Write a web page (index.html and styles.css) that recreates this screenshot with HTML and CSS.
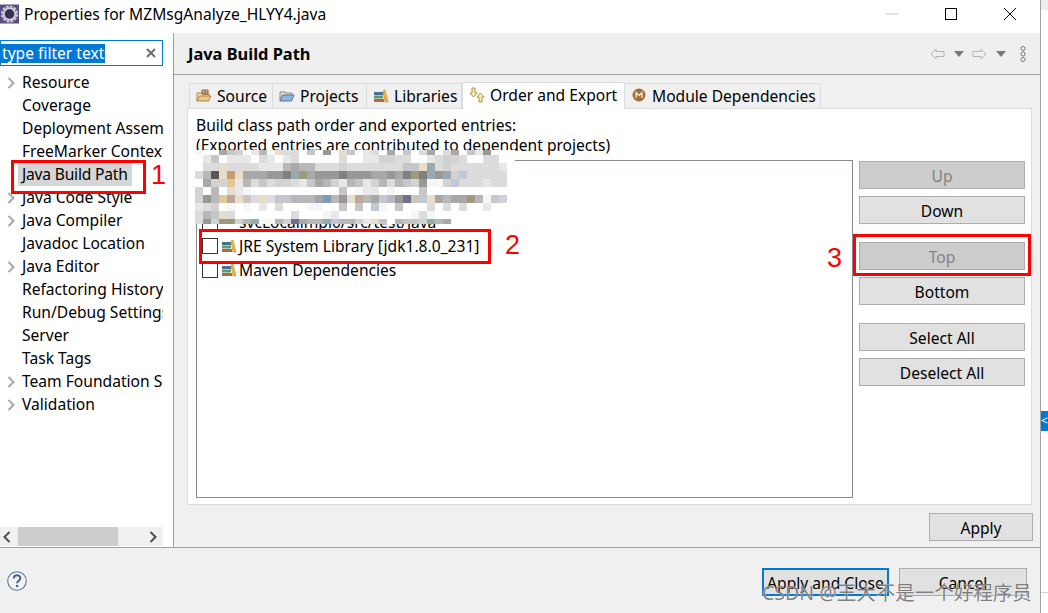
FILE: index.html
```html
<!DOCTYPE html>
<html lang="en">
<head>
<meta charset="utf-8">
<title>Properties for MZMsgAnalyze_HLYY4.java</title>
<link rel="stylesheet" href="styles.css">
</head>
<body>
<svg class="defs" width="0" height="0" aria-hidden="true">
  <symbol id="books" viewBox="0 0 16 16">
    <rect x="1" y="4" width="9" height="3" fill="#4a6f8f"/>
    <rect x="1" y="7.5" width="9" height="3" fill="#5f9a6a"/>
    <rect x="1" y="11" width="10" height="3" fill="#b5683a"/>
    <path d="M10 3l2-1 3 12h-3z" fill="#f0b840" stroke="#b98a28" stroke-width=".6"/>
  </symbol>
  <symbol id="chev" viewBox="0 0 8 12">
    <path d="M1.5 1l5 5-5 5" fill="none" stroke="#a6a6a6" stroke-width="2"/>
  </symbol>
</svg>
<div class="window">
  <header class="titlebar">
    <svg class="app-icon" viewBox="0 0 20 20"><rect width="20" height="20" fill="#5b4c82"/><circle cx="10" cy="10" r="8" fill="none" stroke="#cfcdd8" stroke-width="2" stroke-dasharray="3 1.200"/><circle cx="10" cy="10" r="6" fill="none" stroke="#d8d6e0" stroke-width="2"/><circle cx="10" cy="10" r="5" fill="#3a3157"/></svg>
    <span class="title">Properties for MZMsgAnalyze_HLYY4.java</span>
    <div class="winbtns">
      <svg class="winbtn" viewBox="0 0 12 12"><path d="M0 6h12" stroke="#c8c8c8"/></svg>
      <svg class="winbtn" viewBox="0 0 12 12"><rect x=".5" y=".5" width="11" height="11" fill="none" stroke="#000"/></svg>
      <svg class="winbtn" viewBox="0 0 12 12"><path d="M0 0l12 12M12 0L0 12" stroke="#000" stroke-width="1"/></svg>
    </div>
  </header>
  <div class="main">
    <aside class="sidebar">
      <div class="filter"><span class="filter-sel">type filter text</span>
        <svg class="filter-x" viewBox="0 0 10 10"><path d="M1 1l8 8M9 1L1 9" stroke="#6e6e6e" stroke-width="2"/></svg>
      </div>
      <ul class="tree">
        <li class="node"><svg class="chev"><use href="#chev"/></svg><span>Resource</span></li>
        <li class="node"><span>Coverage</span></li>
        <li class="node"><span>Deployment Assembly</span></li>
        <li class="node"><span>FreeMarker Context</span></li>
        <li class="node"><span class="sel">Java Build Path</span></li>
        <li class="node"><svg class="chev"><use href="#chev"/></svg><span>Java Code Style</span></li>
        <li class="node"><svg class="chev"><use href="#chev"/></svg><span>Java Compiler</span></li>
        <li class="node"><span>Javadoc Location</span></li>
        <li class="node"><svg class="chev"><use href="#chev"/></svg><span>Java Editor</span></li>
        <li class="node"><span>Refactoring History</span></li>
        <li class="node"><span>Run/Debug Settings</span></li>
        <li class="node"><span>Server</span></li>
        <li class="node"><span>Task Tags</span></li>
        <li class="node"><svg class="chev"><use href="#chev"/></svg><span>Team Foundation Server</span></li>
        <li class="node"><svg class="chev"><use href="#chev"/></svg><span>Validation</span></li>
      </ul>
      <div class="hscroll">
        <svg class="sarrow" viewBox="0 0 8 12"><path d="M6.5 1l-5 5 5 5" fill="none" stroke="#505050" stroke-width="2"/></svg>
        <div class="track"><div class="thumb"></div></div>
        <svg class="sarrow" viewBox="0 0 8 12"><path d="M1.5 1l5 5-5 5" fill="none" stroke="#505050" stroke-width="2"/></svg>
      </div>
    </aside>
    <section class="content">
      <div class="head">
        <h1 class="head-title">Java Build Path</h1>
        <div class="nav">
          <svg class="nav-arrow" viewBox="0 0 15 12"><path d="M6 1L1 6l5 5V8.500h8v-5H6z" fill="none" stroke="#b4b4b4"/></svg>
          <svg class="nav-drop" viewBox="0 0 10 6"><path d="M0 0h10L5 6z" fill="#7a7a7a"/></svg>
          <svg class="nav-arrow" viewBox="0 0 15 12"><path d="M9 1l5 5-5 5V8.500H1v-5h8z" fill="none" stroke="#b4b4b4"/></svg>
          <svg class="nav-drop" viewBox="0 0 10 6"><path d="M0 0h10L5 6z" fill="#7a7a7a"/></svg>
          <svg class="nav-more" viewBox="0 0 6 16"><g fill="#fff" stroke="#707070"><circle cx="3" cy="2.500" r="2"/><circle cx="3" cy="8" r="2"/><circle cx="3" cy="13.500" r="2"/></g></svg>
        </div>
      </div>
      <div class="body">
        <nav class="tabs">
          <div class="tab tab-source">
            <svg class="ico" viewBox="0 0 16 16"><path d="M1 13V5h5l1 1h6v2" fill="#f3dca8" stroke="#a5854f"/><path d="M1 13l2.500-5H15l-2.500 5z" fill="#eec785" stroke="#a5854f"/><path d="M6 2h6v4H6zM9 2v4M6 4h6" fill="none" stroke="#8b5a32"/></svg>
            Source</div>
          <div class="tab tab-projects">
            <svg class="ico" viewBox="0 0 16 16"><path d="M1 13V4h5l1 1h6v3" fill="#f0dfa8" stroke="#7f8fa8"/><path d="M1 13l2.500-6H15l-2.500 6z" fill="#8fb4e0" stroke="#4f74a8"/></svg>
            Projects</div>
          <div class="tab tab-libs"><svg class="ico"><use href="#books"/></svg>Libraries</div>
          <div class="tab tab-order">
            <svg class="ico" viewBox="0 0 16 16"><path d="M3 1h3v5h2L4.500 10 1 6h2z" fill="#fbeeb8" stroke="#b8932f"/><path d="M10 15h3v-5h2l-3.500-4L8 10h2z" fill="#fbeeb8" stroke="#b8932f"/></svg>
            Order and Export</div>
          <div class="tab tab-module">
            <svg class="ico" viewBox="0 0 16 16"><circle cx="8" cy="7" r="6.500" fill="#a0703a"/><path d="M5 10V4.500l3 3 3-3V10" fill="none" stroke="#f2e3cc" stroke-width="1.300"/></svg>
            Module Dependencies</div>
        </nav>
        <div class="panel">
          <p class="desc">Build class path order and exported entries:</p>
          <p class="desc">(Exported entries are contributed to dependent projects)</p>
          <div class="cols">
            <ul class="list">
              <li class="row"></li>
              <li class="row"></li>
              <li class="row"><span class="cb"></span><span class="ico"></span>svcLocalimpl0/src/test/java</li>
              <li class="row"><span class="cb"></span><svg class="ico"><use href="#books"/></svg>JRE System Library [jdk1.8.0_231]</li>
              <li class="row"><span class="cb"></span><svg class="ico"><use href="#books"/></svg>Maven Dependencies</li>
            </ul>
            <div class="btncol">
              <div class="btngroup"><button class="btn" disabled>Up</button><button class="btn">Down</button></div>
              <div class="btngroup"><button class="btn" disabled>Top</button><button class="btn">Bottom</button></div>
              <div class="btngroup"><button class="btn">Select All</button><button class="btn">Deselect All</button></div>
            </div>
          </div>
        </div>
        <div class="applyrow"><button class="btn btn-apply">Apply</button></div>
      </div>
    </section>
  </div>
  <footer class="footer">
    <svg class="help" viewBox="0 0 20 20"><circle cx="10" cy="10" r="9.300" fill="#f4f4f8" stroke="#5c739c" stroke-width="1.100"/><path d="M6.800 7.600c0-4.300 6.600-4.300 6.600-.3 0 2.400-3.300 2.500-3.300 4.900" fill="none" stroke="#4a5f8c" stroke-width="2"/><circle cx="10.100" cy="15" r="1.200" fill="#4a5f8c"/></svg>
    <div class="footbtns">
      <button class="btn btn-default">Apply and Close</button>
      <button class="btn btn-cancel">Cancel</button>
    </div>
  </footer>
</div>
<div class="edge"><span class="edge-top"></span><span class="edge-tab">&lt;</span><span class="edge-line"></span></div>

<svg class="mosaic" id="mosaic" width="320" height="74" viewBox="0 0 320 74" shape-rendering="crispEdges"></svg>

<div class="mark mark-1"></div><span class="num num-1">1</span>
<div class="mark mark-2"></div><span class="num num-2">2</span>
<div class="mark mark-3"></div><span class="num num-3">3</span>
<span class="watermark">CSDN @王大不是一个好程序员</span>
<script src="mosaic.js"></script>
</body>
</html>
```

FILE: styles.css
```css
* { box-sizing: border-box; }
html, body { margin: 0; padding: 0; }
body {
  width: 1048px; height: 613px; overflow: hidden; position: relative;
  background: #fff; color: #000;
  font: 15.6px/20px "Noto Sans", "Open Sans", sans-serif;
}
.defs { position: absolute; }
ul { list-style: none; margin: 0; padding: 0; }
p, h1 { margin: 0; }
.window {
  width: 1041px; height: 613px; display: flex; flex-direction: column;
  border-right: 1px solid #a0a0a0;
}
.titlebar { height: 33px; display: flex; align-items: center; background: #fff; padding: 0 0 5px 0; flex: none; }
.app-icon { width: 19px; height: 20px; margin-right: 5px; }
.title { white-space: nowrap; }
.winbtns { margin-left: auto; display: flex; gap: 47px; padding-right: 24px; align-items: center; }
.winbtn { width: 12px; height: 12px; display: block; }
.main { flex: 1; display: flex; min-height: 0; border-bottom: 1px solid #a0a0a0; background: #f0f0f0; }
.sidebar {
  width: 174px; flex: none; display: flex; flex-direction: column; background: #fff;
  border-right: 1px solid #a0a0a0; padding: 7px 10px 1px 0; overflow: hidden;
}
.filter {
  height: 26px; flex: none; border: 1px solid #0078d7; display: flex; align-items: center;
  justify-content: space-between; padding-right: 6px;
}
.filter-sel { background: #0078d7; color: #fff; height: 19px; line-height: 18px; width: 104px; white-space: nowrap; overflow: hidden; padding-left: 1px; }
.filter-x { width: 10px; height: 10px; }
.tree { flex: 1; margin-top: 5px; overflow: hidden; }
.node { height: 23px; line-height: 23px; padding-left: 22px; position: relative; white-space: nowrap; overflow: hidden; }
.chev { position: absolute; left: 7px; top: 6px; width: 8px; height: 12px; }
.sel { display: inline-block; background: #d5d5d5; margin-left: -4px; padding-left: 4px; width: 114px; height: 23px; letter-spacing: -.2px; }
.hscroll { height: 19px; flex: none; background: #f0f0f0; display: flex; align-items: center; justify-content: space-between; padding: 0 6px 0 3px; }
.sarrow { width: 8px; height: 12px; flex: none; }
.track { flex: 1; height: 19px; margin: 0 7px; }
.thumb { width: 100px; height: 19px; background: #cdcdcd; }
.content { flex: 1; display: flex; flex-direction: column; min-width: 0; }
.head {
  height: 42px; flex: none; display: flex; align-items: center; justify-content: space-between;
  border-bottom: 1px solid #a0a0a0; padding: 0 14px 0 13px; background: #efefef;
}
.head-title { font-size: 16.4px; font-weight: 700; margin-left: 1px; padding-top: 1px; }
.nav { display: flex; align-items: center; }
.nav-arrow { width: 15px; height: 12px; }
.nav-drop { width: 10px; height: 6px; margin: 0 8px 0 9px; }
.nav-more { width: 6px; height: 16px; margin-left: 6px; }
.body { flex: 1; display: flex; flex-direction: column; padding: 6px 8px 6px 13px; min-height: 0; }
.tabs { display: flex; align-items: flex-end; padding-left: 2px; height: 27px; flex: none; }
.tab {
  display: flex; align-items: center; height: 25px; background: #f0f0f0; gap: 5px;
  border: 1px solid #dcdcdc; border-bottom: 0; border-left-width: 0; white-space: nowrap; padding-left: 6px;
}
.tab-source { width: 84px; border-left-width: 1px; }
.tab-projects { width: 94px; }
.tab-libs { width: 95px; }
.tab-order { width: 163px; height: 27px; background: #fff; border: 1px solid #dcdcdc; border-bottom: 0; padding-bottom: 2px; margin-bottom: -1px; position: relative; }
.tab-module { width: 196px; }
.ico { width: 16px; height: 16px; flex: none; display: inline-block; }
.panel {
  flex: 1; display: flex; flex-direction: column; background: #fff; border: 1px solid #dcdcdc;
  padding: 6px 6px 6px 8px; min-height: 0;
}
.desc { height: 20px; white-space: nowrap; }
.cols { flex: 1; display: flex; margin-top: 5px; gap: 6px; min-height: 0; }
.list { flex: 1; border: 1px solid #868b92; padding-top: 1px; }
.row { height: 24px; display: flex; align-items: center; padding-left: 5px; white-space: nowrap; }
.cb { width: 16px; height: 16px; border: 1px solid #333; background: #fff; margin-right: 3px; flex: none; }
.row .ico { margin-right: 2px; }
.btncol { width: 166px; flex: none; padding-top: 1px; display: flex; flex-direction: column; gap: 18px; }
.btngroup { display: flex; flex-direction: column; gap: 7px; }
.btn {
  height: 28px; width: 100%; background: #e1e1e1; border: 1px solid #adadad; color: #000;
  font: inherit; padding: 2px 0 0; display: block;
}
.btn:disabled { background: #ccc; color: #838383; }
.applyrow { flex: none; display: flex; justify-content: flex-end; padding-top: 8px; margin-right: -1px; }
.btn-apply { width: 104px; }
.footer { height: 65px; flex: none; background: #f0f0f0; display: flex; justify-content: space-between; padding: 20px 13px 0 7px; }
.help { width: 20px; height: 20px; margin-top: 3px; }
.footbtns { display: flex; gap: 10px; }
.btn-default { width: 127px; border: 2px solid #0078d7; }
.btn-cancel { width: 128px; }
.edge { position: absolute; left: 1041px; top: 0; width: 7px; height: 613px; }
.edge-top { position: absolute; left: 0; top: 0; width: 7px; height: 10px; background: #ececec; }
.edge-tab { position: absolute; left: 0; top: 411px; width: 7px; height: 20px; background: #0078d4; color: #fff; font-size: 12px; line-height: 20px; overflow: hidden; }
.edge-line { position: absolute; left: 0; top: 592px; width: 7px; height: 1px; background: #d0d0d0; }
.mosaic { position: absolute; left: 195px; top: 150px; }
.mark { position: absolute; border: 3px solid #f00; }
.mark-1 { left: 11px; top: 160px; width: 135px; height: 34px; }
.mark-2 { left: 199px; top: 229px; width: 292px; height: 35px; }
.mark-3 { left: 853px; top: 234px; width: 178px; height: 42px; }
.num { position: absolute; color: #f00; font-size: 27px; line-height: 30px; font-family: "Liberation Sans", sans-serif; }
.num-1 { left: 151px; top: 160px; }
.num-2 { left: 505px; top: 230px; }
.num-3 { left: 827px; top: 243px; }
.watermark {
  position: absolute; left: 762px; top: 580px; white-space: nowrap; color: rgba(105,105,105,.85);
  font: 19.5px/26px "Noto Sans", "Noto Sans CJK SC", sans-serif; text-shadow: 0 0 1px #fff;
}
```

FILE: mosaic.js
```js
// Pixelated redaction block: one character per 8px cell; the top and last rows are cut short.
var palette = {
  '.': '#ffffff', '1': '#f6f6f6', '2': '#e8e8e8', '3': '#dcdcdc', '4': '#d2d2d2', '5': '#c6c6c6',
  '6': '#b8b8b8', '7': '#a8a8a8', '8': '#989898', '9': '#808080',
  t: '#c4a070', u: '#e0c898', v: '#e8dccc', b: '#98aab0', c: '#c0c8d4', d: '#585858',
  p: '#707088', o: '#a09880', s: '#7f9cac', k: '#bba898'
};
var rows = [
  '1..754.261v33.5.8.vc' + '.23.7.5.37.37.528...',
  '.25.222.32.23.....3.' + '.224433..23443..33..',
  '.33v33332226766' + '33343' + '33333355vb34333333' + '2.',
  '36dvtv777889bo788898' + '8877879o9b8b4c33333.',
  '.744u263534432576426' + '524636548114c333233.',
  '4.6.v21...........5.' + '122.1...5...........',
  '486ukv53v35c666bs68v' + 'k67c68p5cv7677o61c4.',
  '234.1.1.2.3...11..5.' + '5.c1.5...3.3.3..2...',
  '365v3.......3...12..' + '.......131..........',
  '384oo46b1164p766bc66' + '42v5.6554b67........'
];
var svg = document.getElementById('mosaic');
var ns = 'http://www.w3.org/2000/svg';
var y = 0;
rows.forEach(function (row, r) {
  var h = (r === 0 || r === 9) ? 5 : 8;
  row.split('').forEach(function (ch, c) {
    var cell = document.createElementNS(ns, 'rect');
    cell.setAttribute('x', c * 8);
    cell.setAttribute('y', y);
    cell.setAttribute('width', 8);
    cell.setAttribute('height', h);
    cell.setAttribute('fill', palette[ch]);
    svg.appendChild(cell);
  });
  y += h;
});
```
